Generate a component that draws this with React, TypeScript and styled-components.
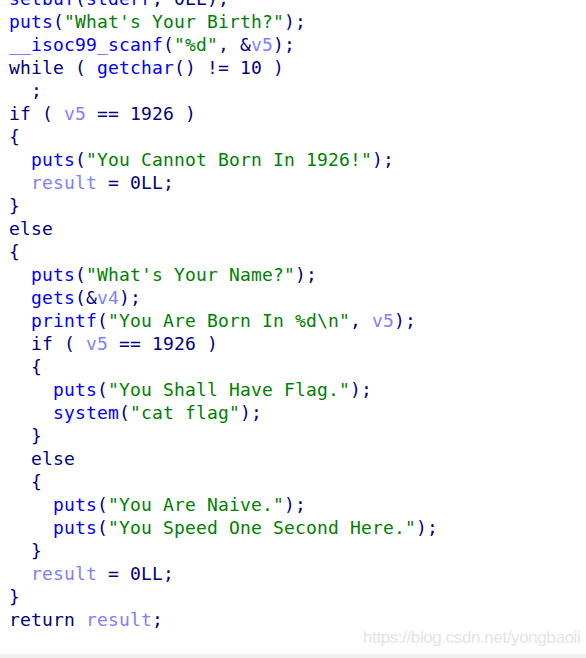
import React from "react";
import styled, { createGlobalStyle } from "styled-components";

const Global = createGlobalStyle`
  html, body { margin: 0; padding: 0; background: #ffffff; }
  body { width: 586px; height: 658px; overflow: hidden; }
`;

type Kind = "kw" | "fn" | "str" | "var" | "op";
type Tok = [Kind, string];

const colors: Record<Kind, string> = {
  kw: "#000080",
  fn: "#0000ff",
  str: "#008000",
  var: "#8080ff",
  op: "#000080",
};

const lines: Tok[][] = [
  [["fn", "setbuf"], ["op", "("], ["fn", "stderr"], ["op", ", 0LL);"]],
  [["fn", "puts"], ["op", "("], ["str", "\"What's Your Birth?\""], ["op", ");"]],
  [["fn", "__isoc99_scanf"], ["op", "("], ["str", "\"%d\""], ["op", ", &"], ["var", "v5"], ["op", ");"]],
  [["kw", "while ( "], ["fn", "getchar"], ["op", "() != 10 )"]],
  [["op", "  ;"]],
  [["kw", "if ( "], ["var", "v5"], ["op", " == 1926 )"]],
  [["op", "{"]],
  [["op", "  "], ["fn", "puts"], ["op", "("], ["str", "\"You Cannot Born In 1926!\""], ["op", ");"]],
  [["op", "  "], ["var", "result"], ["op", " = 0LL;"]],
  [["op", "}"]],
  [["kw", "else"]],
  [["op", "{"]],
  [["op", "  "], ["fn", "puts"], ["op", "("], ["str", "\"What's Your Name?\""], ["op", ");"]],
  [["op", "  "], ["fn", "gets"], ["op", "(&"], ["var", "v4"], ["op", ");"]],
  [["op", "  "], ["fn", "printf"], ["op", "("], ["str", "\"You Are Born In %d\\n\""], ["op", ", "], ["var", "v5"], ["op", ");"]],
  [["kw", "  if ( "], ["var", "v5"], ["op", " == 1926 )"]],
  [["op", "  {"]],
  [["op", "    "], ["fn", "puts"], ["op", "("], ["str", "\"You Shall Have Flag.\""], ["op", ");"]],
  [["op", "    "], ["fn", "system"], ["op", "("], ["str", "\"cat flag\""], ["op", ");"]],
  [["op", "  }"]],
  [["kw", "  else"]],
  [["op", "  {"]],
  [["op", "    "], ["fn", "puts"], ["op", "("], ["str", "\"You Are Naive.\""], ["op", ");"]],
  [["op", "    "], ["fn", "puts"], ["op", "("], ["str", "\"You Speed One Second Here.\""], ["op", ");"]],
  [["op", "  }"]],
  [["op", "  "], ["var", "result"], ["op", " = 0LL;"]],
  [["op", "}"]],
  [["kw", "return "], ["var", "result"], ["op", ";"]],
];

const Page = styled.div`
  position: relative;
  width: 586px;
  height: 658px;
  display: flex;
  flex-direction: column;
  overflow: hidden;
  background: #ffffff;
`;

const Code = styled.pre`
  flex: 1;
  margin: -13px 0 0 0;
  padding: 0 0 0 9px;
  font-family: "DejaVu Sans Mono", monospace;
  font-size: 18px;
  letter-spacing: 0.16px;
  line-height: 23px;
  white-space: pre;
`;

const Line = styled.div`
  height: 23px;
`;

const Span = styled.span<{ $kind: Kind }>`
  color: ${(p) => colors[p.$kind]};
`;

const Watermark = styled.div`
  position: absolute;
  left: 363px;
  top: 628px;
  font-family: "Liberation Sans", Arial, sans-serif;
  font-size: 17px;
  letter-spacing: -0.4px;
  color: #e4e4e4;
  white-space: nowrap;
`;

const Footer = styled.div`
  height: 4px;
  background: #f0f0f0;
  flex-shrink: 0;
`;

export default function App() {
  return (
    <>
      <Global />
      <Page>
        <Code>
          {lines.map((toks, i) => (
            <Line key={i}>
              {toks.map(([k, t], j) => (
                <Span key={j} $kind={k}>
                  {t}
                </Span>
              ))}
            </Line>
          ))}
        </Code>
        <Watermark>https://blog.csdn.net/yongbaoii</Watermark>
        <Footer />
      </Page>
    </>
  );
}
